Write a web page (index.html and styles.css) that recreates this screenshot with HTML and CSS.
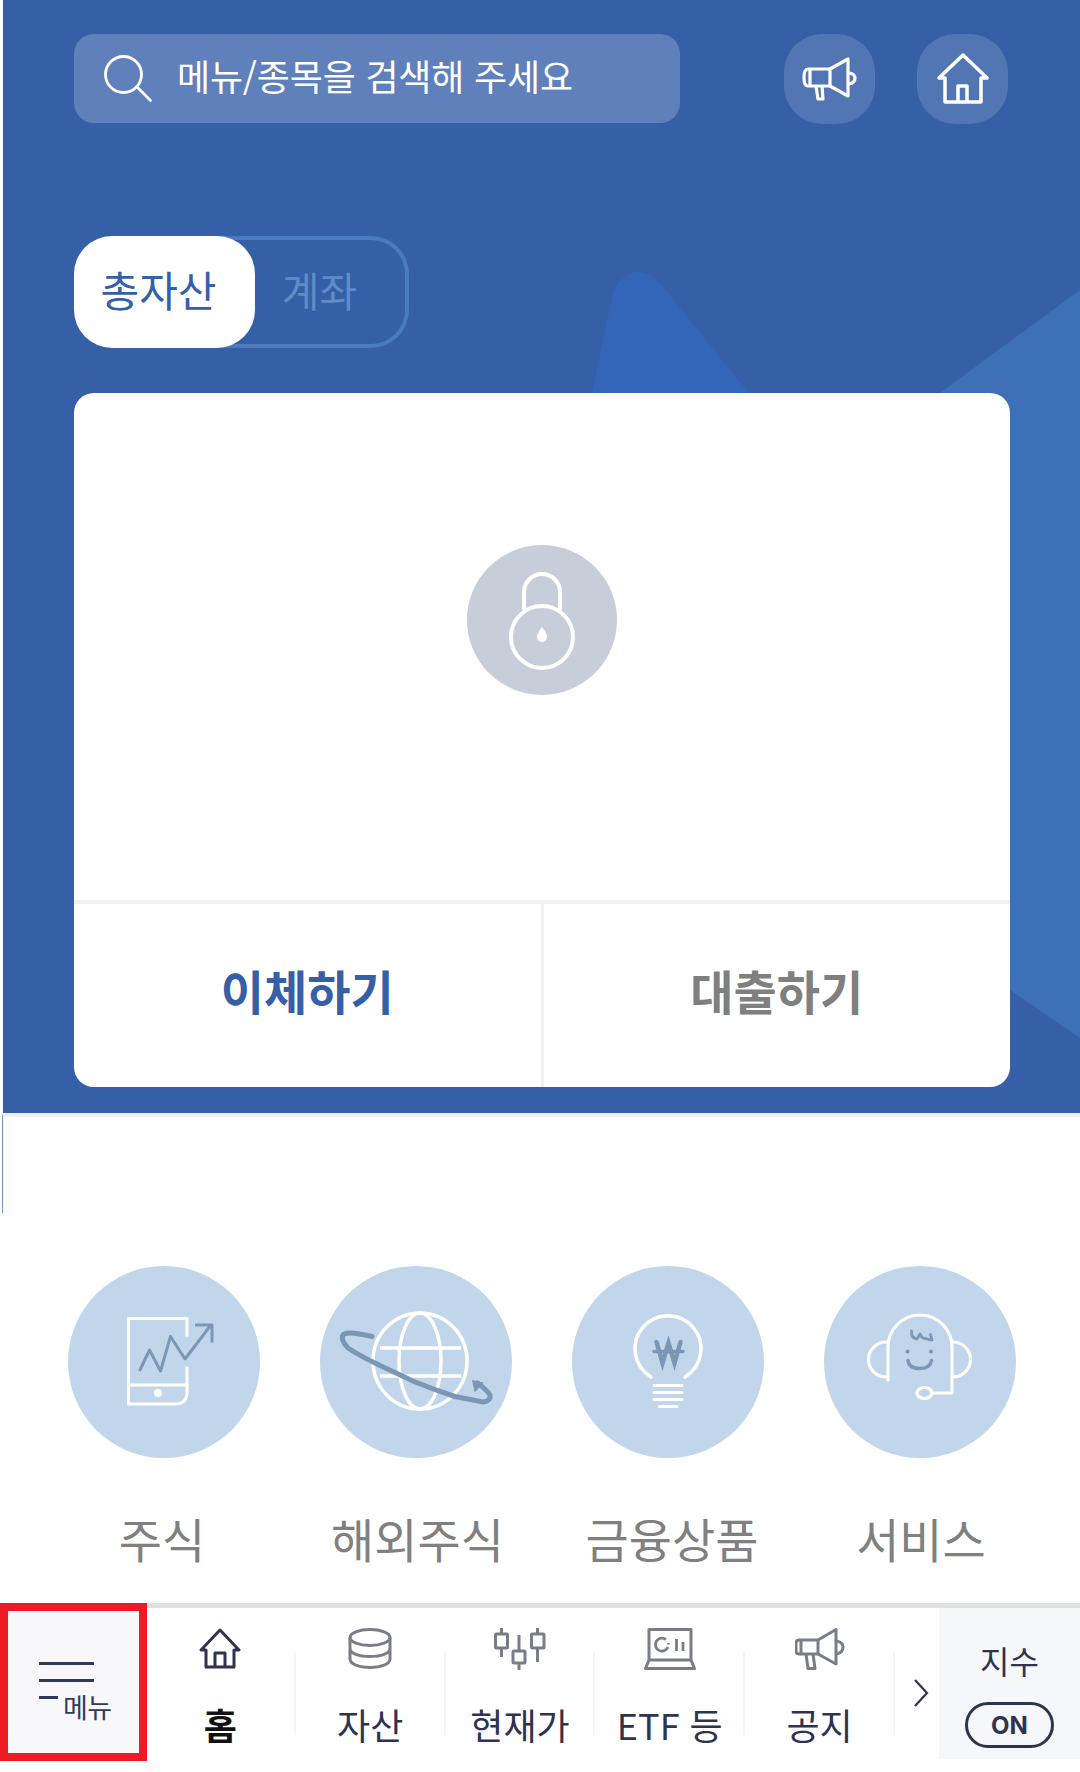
FILE: index.html
```html
<!DOCTYPE html>
<html lang="ko">
<head>
  <meta charset="UTF-8">
  <meta name="viewport" content="width=device-width, initial-scale=1.0">
  <title>홈</title>
  <link rel="stylesheet" href="styles.css">
</head>
<body>
  <div class="hero">
    <svg class="hero-bg" width="1077" height="1113" viewBox="3 0 1077 1113">
      <path d="M592 393 L613 293 Q622 272 639 272 Q652 272 663 287 L749 393 Z" fill="#3366b8"/>
      <path d="M940 393 L1080 290 L1080 1038 L1010 990 Z" fill="#3e70b8"/>
    </svg>

    <div class="topbar">
      <div class="search">
        <svg width="50" height="50" viewBox="0 0 50 50" fill="none" stroke="#fff" stroke-width="2.800">
          <circle cx="20.500" cy="20.500" r="18"/>
          <path d="M34 33 L47.500 46.500" stroke-linecap="round"/>
        </svg>
        <span>메뉴/종목을 검색해 주세요</span>
      </div>
      <div class="round-btn first">
        <svg width="56" height="44" viewBox="0 0 56 44" fill="none" stroke="#fff" stroke-width="3.200" stroke-linejoin="round">
          <path d="M28 12 L46 2 V39 L28 29 Z"/>
          <path d="M28 12 H6 Q2 12 2 20.500 Q2 29 6 29 H28 M8 12 V29"/>
          <path d="M14 29 L16 42 H21 L20 29"/>
          <path d="M47 16 Q53 17 53 21 Q53 26 47 27"/>
        </svg>
      </div>
      <div class="round-btn">
        <svg width="52" height="52" viewBox="0 0 52 52" fill="none" stroke="#fff" stroke-width="3.500" stroke-linejoin="round">
          <path d="M26 2 L50 25 H44 V49 H8 V25 H2 Z"/>
          <path d="M21 49 V33 H30 V49"/>
        </svg>
      </div>
    </div>

    <div class="toggle">
      <div class="toggle-on">총자산</div>
      <div class="toggle-off">계좌</div>
    </div>

    <div class="card">
      <div class="card-body">
        <div class="lock">
          <svg width="68" height="100" viewBox="0 0 68 100" fill="none" stroke="#fff" stroke-width="4">
            <path d="M16 40 V22 A18 18 0 0 1 52 22 V40"/>
            <circle cx="34" cy="67" r="31"/>
            <path d="M34 57 Q39 63 39 67 A5 5 0 0 1 29 67 Q29 63 34 57 Z" fill="#fff" stroke="none"/>
          </svg>
        </div>
      </div>
      <div class="card-actions">
        <div class="action primary">이체하기</div>
        <div class="action">대출하기</div>
      </div>
    </div>
  </div>

  <div class="spacer"></div>

  <div class="services">
    <div class="service">
      <div class="service-icon">
        <svg width="192" height="192" viewBox="0 0 192 192" fill="none" stroke="#fff" stroke-width="3" stroke-linejoin="round">
          <path d="M119 70.500 V52.500 H60.500 V138 H107 Q119 138 119 126 V100.500"/>
          <path d="M60.500 119 H119"/>
          <circle cx="90" cy="127" r="2.500" fill="#fff"/>
          <path d="M71.500 105 L81.500 84 L92.500 105 L102.500 70.500 L117 93 L143 59 M127 59 H144 V76.500" stroke="#7b97b4"/>
        </svg>
      </div>
      <div class="service-label">주식</div>
    </div>
    <div class="service">
      <div class="service-icon">
        <svg width="192" height="192" viewBox="0 0 192 192" fill="none" stroke="#fff" stroke-width="3.500">
          <ellipse cx="100" cy="95" rx="47" ry="48"/>
          <ellipse cx="100" cy="95" rx="21" ry="48"/>
          <path d="M60 82 H141 M60 110 H141"/>
          <path d="M52 70.500 Q30 65 24 68 Q19 72 28 82 Q40 90 59 99 L94 115.500 Q115 124 135 130.500 L163 136 Q171 135 170 129 Q167 124 157.500 117" stroke="#7b97b4" stroke-width="5" stroke-linecap="round"/>
          <path d="M152.500 114.500 L163 117 L155 125.500 Z" fill="#7b97b4" stroke="#7b97b4" stroke-width="1"/>
        </svg>
      </div>
      <div class="service-label">해외주식</div>
    </div>
    <div class="service">
      <div class="service-icon">
        <svg width="192" height="192" viewBox="0 0 192 192" fill="none" stroke="#fff" stroke-width="3.500" stroke-linecap="round">
          <path d="M79 111 A33 33 0 1 1 113 111"/>
          <path d="M82 119.500 H110 M82 126.500 H110 M82 133.500 H110 M87.500 140.500 H105" stroke-width="3"/>
          <path d="M84.500 76 L90.500 97 L96.500 77 L102.500 97 L108.500 76" stroke="#7b97b4" stroke-width="4.500"/>
          <path d="M82 85.500 H111" stroke="#7b97b4" stroke-width="3.500"/>
        </svg>
      </div>
      <div class="service-label">금융상품</div>
    </div>
    <div class="service">
      <div class="service-icon">
        <svg width="192" height="192" viewBox="0 0 192 192" fill="none" stroke="#fff" stroke-width="3.200" stroke-linecap="round" stroke-linejoin="round">
          <path d="M64 114 V81 A32 32 0 0 1 128 81 V127 H108"/>
          <path d="M62 76 A17.500 17.500 0 0 0 62 111 M129 76 A17.500 17.500 0 0 1 129 111"/>
          <ellipse cx="100.500" cy="127" rx="7.500" ry="5.500"/>
          <path d="M87.500 65 Q87 72 93 73 L96 68 Q98 73 102 72.500 Q105 74 108 74 L106.500 68.500" stroke="#7b97b4" stroke-width="2.800"/>
          <circle cx="83.500" cy="85.500" r="2" fill="#7b97b4" stroke="none"/>
          <circle cx="107" cy="85.500" r="2" fill="#7b97b4" stroke="none"/>
          <path d="M84 94.500 Q85 102.500 96 102.500 Q106 102.500 107.500 94.500" stroke="#7b97b4" stroke-width="3.500"/>
        </svg>
      </div>
      <div class="service-label">서비스</div>
    </div>
  </div>

  <div class="tabbar">
    <div class="menu-btn">
      <div class="menu-lines"><i></i><i></i><i class="short"></i></div>
      <span>메뉴</span>
    </div>
    <div class="tabs">
      <div class="tab active">
        <svg width="42" height="42" viewBox="0 0 42 42" fill="none" stroke="#2d3350" stroke-width="3" stroke-linejoin="round">
          <path d="M21 2 L40 22 H35 V39 H7 V22 H2 Z"/>
          <path d="M16 39 V25 H26 V39"/>
        </svg>
        <span>홈</span>
      </div>
      <div class="tab">
        <svg width="44" height="42" viewBox="0 0 44 42" fill="none" stroke="#7a7c8a" stroke-width="3">
          <ellipse cx="22" cy="9.500" rx="20" ry="8"/>
          <path d="M2 9.500 V31 C2 36 11 39.500 22 39.500 C33 39.500 42 36 42 31 V9.500 M2 20.500 C2 25.500 11 28.500 22 28.500 C33 28.500 42 25.500 42 20.500"/>
        </svg>
        <span>자산</span>
      </div>
      <div class="tab">
        <svg width="52" height="42" viewBox="0 0 52 42" fill="none" stroke="#7a7c8a" stroke-width="3">
          <rect x="1.500" y="6" width="12" height="14" rx="1"/>
          <path d="M7.500 0 V6 M7.500 20 V29"/>
          <rect x="19" y="23" width="12" height="12" rx="1"/>
          <path d="M25 7 V23 M25 35 V42"/>
          <rect x="37.500" y="6" width="12.500" height="14" rx="1"/>
          <path d="M43.500 0 V6 M43.500 20 V34"/>
        </svg>
        <span>현재가</span>
      </div>
      <div class="tab">
        <svg width="52" height="42" viewBox="0 0 52 42" fill="none" stroke="#7a7c8a" stroke-width="3" stroke-linejoin="round">
          <path d="M5 32 V1.500 H47 V32 M5 32 L1.500 40.500 H50.500 L47 32 Z"/>
          <path d="M22 11.500 A6.500 6.500 0 1 0 24 19 M24.500 15 V16.500" stroke-width="2.800"/>
          <path d="M32.500 11 V23 M39 14 V23" stroke-width="2.800"/>
        </svg>
        <span>ETF 등</span>
      </div>
      <div class="tab">
        <svg width="50" height="42" viewBox="0 0 50 42" fill="none" stroke="#7a7c8a" stroke-width="3" stroke-linejoin="round">
          <path d="M4 12 H23 L41 1.500 V36 L23 26 H4 Q1 26 1 23 V15 Q1 12 4 12 Z"/>
          <path d="M6 12 V26 M23 12 V26 M11 26 L13 40.500 H20 L18 26"/>
          <path d="M41 13 Q48 14 48 19 Q48 25 41 26"/>
        </svg>
        <span>공지</span>
      </div>
    </div>
    <div class="chevron">
      <svg width="16" height="30" viewBox="0 0 16 30" fill="none" stroke="#2d3350" stroke-width="2.200">
        <path d="M2 2 L14 15 L2 28"/>
      </svg>
    </div>
    <div class="index-panel">
      <div class="index-title">지수</div>
      <div class="index-pill">ON</div>
    </div>
  </div>
</body>
</html>
```

FILE: styles.css
```css
* { box-sizing: border-box; }
html, body { margin: 0; padding: 0; }
body { width: 1080px; height: 1772px; background: #fff; font-family: "Noto Sans CJK KR", "Noto Sans", sans-serif; overflow: hidden; }

.hero { position: relative; margin-left: 3px; height: 1113px; background: #3560a8; padding: 34px 70px 0 71px; }
.hero-bg { position: absolute; left: 0; top: 0; }

.topbar { position: relative; display: flex; height: 90px; }
.search { display: flex; align-items: center; width: 606px; height: 89px; background: #5f80ba; border-radius: 20px; padding-left: 29px; color: #fff; font-size: 36px; }
.search span { margin: 0 0 7px 24px; letter-spacing: -0.2px; }
.round-btn { display: flex; align-items: center; justify-content: center; width: 91px; height: 90px; margin-left: 42px; background: #5276b3; border-radius: 42%; }
.round-btn.first { margin-left: 104px; }

.toggle { position: relative; display: flex; width: 335px; height: 112px; margin-top: 112px; border: 4px solid #4a7cbd; border-left: 0; border-radius: 38px; }
.toggle-on { display: flex; align-items: center; justify-content: center; width: 181px; height: 112px; margin-top: -4px; padding: 0 12px 7px 0; background: #fff; border-radius: 38px; color: #3560a8; font-size: 42px; }
.toggle-off { flex: 1; display: flex; align-items: center; justify-content: center; padding: 0 21px 7px 0; color: #5f8cc6; font-size: 41px; }

.card { position: relative; width: 936px; height: 694px; margin-top: 45px; background: #fff; border-radius: 20px; overflow: hidden; }
.card-body { display: flex; justify-content: center; height: 511px; padding-top: 152px; border-bottom: 4px solid #f0f0f0; }
.lock { display: flex; align-items: center; justify-content: center; width: 150px; height: 150px; background: #c8cdda; border-radius: 50%; }
.card-actions { display: flex; height: 183px; }
.action { flex: 1; display: flex; align-items: center; justify-content: center; padding-bottom: 12px; color: #7f7f7f; font-size: 47px; font-weight: 700; }
.action.primary { color: #3560a8; border-right: 3px solid #f0f0f0; }

.spacer { height: 100px; margin-left: 2px; border-top: 4px solid #f0f0f0; border-left: 1px solid #6f8fc8; }

.services { display: flex; height: 390px; padding: 53px 0 0 38px; }
.service { display: flex; flex-direction: column; align-items: center; width: 252px; }
.service-icon { width: 192px; height: 192px; background: #c1d6eb; border-radius: 50%; }
.service-icon svg { display: block; }
.service-label { margin-top: 49px; color: #808080; font-size: 47px; line-height: 62px; white-space: nowrap; }
.service:first-child .service-label { margin-right: 4px; }
.service:nth-child(2) .service-label { margin-left: 3px; }
.service:nth-child(3) .service-label { margin-left: 8px; }
.service:nth-child(4) .service-label { margin-left: 2px; }

.tabbar { display: flex; height: 158px; border-top: 5px solid #e0e0e0; }
.menu-btn { position: relative; width: 147px; height: 158px; margin-top: -5px; background: #f8f8fb; border: 8px solid #ed1c24; }
.menu-lines { position: absolute; left: 31px; top: 51px; width: 55px; }
.menu-lines i { display: block; height: 3px; margin-bottom: 14px; background: #33395a; }
.menu-lines i.short { width: 19px; }
.menu-btn span { position: absolute; left: 55px; top: 79px; color: #33395a; font-size: 27px; line-height: 34px; letter-spacing: -0.5px; }

.tabs { display: flex; width: 749px; }
.tab { position: relative; display: flex; flex-direction: column; align-items: center; width: 150px; padding: 20px 3px 0 0; color: #2d3350; font-size: 36px; }
.tab svg { flex: none; }
.tab span { margin-top: 30px; line-height: 48px; white-space: nowrap; }
.tab.active span { color: #111; font-weight: 700; }
.tab::after { content: ""; position: absolute; right: 1px; top: 44px; width: 2px; height: 83px; background: #f5f5f7; }

.chevron { display: flex; justify-content: center; width: 43px; height: 150px; padding: 70px 0 0 7px; }
.index-panel { display: flex; flex-direction: column; align-items: center; width: 141px; height: 151px; background: #f6f7fa; padding-top: 30px; color: #2d3350; }
.index-title { font-size: 32px; line-height: 44px; }
.index-pill { display: flex; align-items: center; justify-content: center; width: 89px; height: 46px; margin-top: 20px; border: 3px solid #2d3350; border-radius: 23px; font-family: "Inter", "Noto Sans", sans-serif; font-size: 24px; font-weight: 700; }
```
